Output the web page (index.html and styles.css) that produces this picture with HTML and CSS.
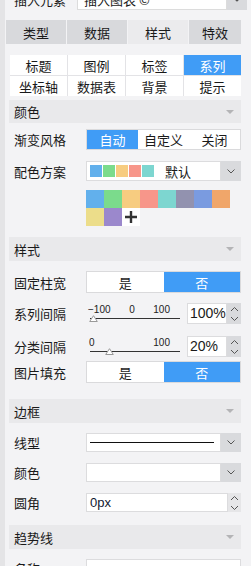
FILE: index.html
```html
<!DOCTYPE html>
<html lang="zh">
<head>
<meta charset="utf-8">
<link rel="stylesheet" href="styles.css">
</head>
<body>
<div class="panel">
  <div class="top-row">
    <span class="lbl top-lbl">插入元素</span>
    <div class="top-select">插入图表 ©</div>
    <div class="arrow-btn"><svg width="8" height="5" viewBox="0 0 8 5"><path d="M0.5 0.5 L4 4 L7.5 0.5" fill="none" stroke="#555" stroke-width="1.2"/></svg></div>
  </div>

  <div class="tabs">
    <div class="tab">类型</div>
    <div class="tab">数据</div>
    <div class="tab active">样式</div>
    <div class="tab">特效</div>
  </div>

  <div class="subtabs">
    <div class="sub">标题</div>
    <div class="sub">图例</div>
    <div class="sub">标签</div>
    <div class="sub active">系列</div>
    <div class="sub">坐标轴</div>
    <div class="sub">数据表</div>
    <div class="sub">背景</div>
    <div class="sub">提示</div>
  </div>

  <div class="head h-color"><span>颜色</span><i class="tri"></i></div>

  <div class="row r-grad">
    <span class="lbl">渐变风格</span>
    <div class="seg">
      <div class="seg-i on">自动</div>
      <div class="seg-i">自定义</div>
      <div class="seg-i">关闭</div>
    </div>
  </div>

  <div class="row r-scheme">
    <span class="lbl">配色方案</span>
    <div class="select">
      <div class="sel-body scheme">
        <span class="sw" style="background:#62b0ec"></span>
        <span class="sw" style="background:#7bdb8c"></span>
        <span class="sw" style="background:#f7cc80"></span>
        <span class="sw" style="background:#f7968a"></span>
        <span class="sw" style="background:#7dd6d0"></span>
        <span class="scheme-name">默认</span>
      </div>
      <div class="sel-btn"><svg width="8" height="5" viewBox="0 0 8 5"><path d="M0.5 0.5 L4 4 L7.5 0.5" fill="none" stroke="#555" stroke-width="1"/></svg></div>
    </div>
  </div>

  <div class="palette">
    <span style="background:#62b0ec"></span>
    <span style="background:#7bdb8c"></span>
    <span style="background:#f7cc80"></span>
    <span style="background:#f7968a"></span>
    <span style="background:#7dd6d0"></span>
    <span style="background:#9292af"></span>
    <span style="background:#7a9be0"></span>
    <span style="background:#f0a66a"></span>
    <span style="background:#ecdd8a"></span>
    <span style="background:#9b88cc"></span>
    <span class="plus"><svg width="12" height="12" viewBox="0 0 12 12"><path d="M6 0 V12 M0 6 H12" stroke="#333" stroke-width="2.4"/></svg></span>
  </div>

  <div class="head h-style"><span>样式</span><i class="tri"></i></div>

  <div class="row r-fixed">
    <span class="lbl">固定柱宽</span>
    <div class="toggle">
      <div class="tg">是</div>
      <div class="tg on">否</div>
    </div>
  </div>

  <div class="row r-slider1">
    <span class="lbl">系列间隔</span>
    <div class="slider">
      <div class="ticks"><span>−100</span><span>0</span><span>100</span></div>
      <div class="track"></div>
      <svg class="thumb" style="left:1px" width="9" height="7" viewBox="0 0 9 7"><path d="M4.5 0.7 L8.3 6.5 H0.7 Z" fill="#fff" stroke="#999" stroke-width="1"/></svg>
    </div>
    <div class="num">100%</div>
    <div class="spin"><svg width="9" height="16" viewBox="0 0 9 16"><path d="M1 5 L4.5 1.5 L8 5 M1 11 L4.5 14.5 L8 11" fill="none" stroke="#555" stroke-width="1"/></svg></div>
  </div>

  <div class="row r-slider2">
    <span class="lbl">分类间隔</span>
    <div class="slider">
      <div class="ticks t2"><span>0</span><span>100</span></div>
      <div class="track"></div>
      <svg class="thumb" style="left:17px" width="9" height="7" viewBox="0 0 9 7"><path d="M4.5 0.7 L8.3 6.5 H0.7 Z" fill="#fff" stroke="#999" stroke-width="1"/></svg>
    </div>
    <div class="num">20%</div>
    <div class="spin"><svg width="9" height="16" viewBox="0 0 9 16"><path d="M1 5 L4.5 1.5 L8 5 M1 11 L4.5 14.5 L8 11" fill="none" stroke="#555" stroke-width="1"/></svg></div>
  </div>

  <div class="row r-img">
    <span class="lbl">图片填充</span>
    <div class="toggle">
      <div class="tg">是</div>
      <div class="tg on">否</div>
    </div>
  </div>

  <div class="head h-border"><span>边框</span><i class="tri"></i></div>

  <div class="row r-line">
    <span class="lbl">线型</span>
    <div class="select">
      <div class="sel-body"><span class="line"></span></div>
      <div class="sel-btn"><svg width="8" height="5" viewBox="0 0 8 5"><path d="M0.5 0.5 L4 4 L7.5 0.5" fill="none" stroke="#555" stroke-width="1"/></svg></div>
    </div>
  </div>

  <div class="row r-bcolor">
    <span class="lbl">颜色</span>
    <div class="select">
      <div class="sel-body"></div>
      <div class="sel-btn"><svg width="8" height="5" viewBox="0 0 8 5"><path d="M0.5 0.5 L4 4 L7.5 0.5" fill="none" stroke="#555" stroke-width="1"/></svg></div>
    </div>
  </div>

  <div class="row r-radius">
    <span class="lbl">圆角</span>
    <div class="text-in">0px</div>
    <div class="spin light"><svg width="9" height="16" viewBox="0 0 9 16"><path d="M1 5 L4.5 1.5 L8 5 M1 11 L4.5 14.5 L8 11" fill="none" stroke="#555" stroke-width="1"/></svg></div>
  </div>

  <div class="head h-trend"><span>趋势线</span><i class="tri"></i></div>

  <div class="row r-name">
    <span class="lbl">名称</span>
    <div class="text-in full"></div>
  </div>
</div>
</body>
</html>
```

FILE: styles.css
```css
* { box-sizing: border-box; }
html, body { margin: 0; padding: 0; }
body {
  background: #f3f3f5;
  font-family: "Noto Sans CJK SC", "Noto Sans", sans-serif;
  font-size: 13px;
  color: #1a1a1a;
  width: 251px;
  height: 566px;
  overflow: hidden;
}
.panel {
  border-left: 5px solid #e4e4e6;
  width: 251px;
  height: 566px;
  overflow: hidden;
}

.top-row {
  display: flex;
  align-items: center;
  height: 21px;
  margin-top: -11px;
}
.top-lbl { width: 66px; padding-left: 9px; }
.top-select {
  width: 150px;
  height: 21px;
  background: #fff;
  border: 1px solid #dcdcdc;
  padding-left: 6px;
  line-height: 19px;
  white-space: nowrap;
  overflow: hidden;
}
.arrow-btn {
  width: 20px;
  height: 21px;
  background: #d9dadd;
  display: flex;
  align-items: center;
  justify-content: center;
}

.tabs {
  display: grid;
  grid-template-columns: 60px 60px 60px 52px;
  gap: 1px;
  margin: 10px 0 0 1px;
  height: 24px;
}
.tab {
  background: #d8d9dc;
  display: flex;
  align-items: center;
  justify-content: center;
}
.tab.active { background: #ebebed; }

.subtabs {
  display: grid;
  grid-template-columns: repeat(4, 57px);
  grid-auto-rows: 20px;
  gap: 1px;
  background: #e3e3e6;
  margin: 11px 0 0 5px;
  width: 231px;
}
.sub {
  background: #fff;
  display: flex;
  align-items: center;
  justify-content: center;
}
.sub.active { background: #409cf6; color: #fff; }

.head {
  margin-left: 4px;
  width: 232px;
  height: 24px;
  background: #e9e9eb;
  display: flex;
  align-items: center;
  justify-content: space-between;
  padding: 0 7px 0 5px;
}
.tri {
  width: 0; height: 0;
  border-left: 4px solid transparent;
  border-right: 4px solid transparent;
  border-top: 4px solid #b4b4b6;
}
.h-color { margin-top: 4px; height: 23px; }
.h-style { margin-top: 11px; }
.h-border { margin-top: 16px; }
.h-trend { margin-top: 13px; }

.row {
  display: flex;
  align-items: center;
  margin-left: 9px;
}
.lbl { width: 72px; flex: none; }

.seg, .toggle {
  width: 155px;
  display: flex;
  border: 1px solid #dadadc;
  background: #fff;
}
.seg { height: 21px; }
.toggle { height: 22px; }
.seg-i, .tg {
  flex: 1;
  display: flex;
  align-items: center;
  justify-content: center;
  background: #fff;
}
.seg-i.on, .tg.on { background: #409cf6; color: #fff; }
.seg .seg-i:first-child { flex: 0 0 51px; }

.r-grad { margin-top: 6px; }
.r-scheme { margin-top: 11px; }
.select {
  width: 155px;
  height: 20px;
  display: flex;
}
.sel-body {
  flex: 1;
  background: #fff;
  border: 1px solid #dcdcde;
  display: flex;
  align-items: center;
  padding-left: 3px;
}
.sel-btn {
  width: 20px;
  background: #d9dadd;
  display: flex;
  align-items: center;
  justify-content: center;
}
.scheme { gap: 1px; }
.sw { width: 12px; height: 12px; display: block; }
.scheme-name { margin-left: 10px; }

.palette {
  display: grid;
  grid-template-columns: repeat(8, 18px);
  grid-auto-rows: 18px;
  margin: 9px 0 0 81px;
}
.palette span { display: block; }
.palette .plus {
  background: #fff;
  display: flex;
  align-items: center;
  justify-content: center;
}

.r-fixed { margin-top: 10px; }
.r-slider1 { margin-top: 10px; height: 21px; }
.r-slider2 { margin-top: 12px; height: 21px; }
.r-img { margin-top: 4px; }

.slider {
  position: relative;
  width: 92px;
  height: 21px;
  margin-left: 2px;
}
.ticks {
  display: flex;
  justify-content: space-between;
  font-family: "Liberation Sans", Arial, sans-serif;
  font-size: 10px;
  line-height: 10px;
  padding: 2px 10px 0 0;
  color: #222;
}
.ticks.t2 { padding-left: 1px; }
.track {
  position: absolute;
  left: 2px;
  right: 0;
  top: 15px;
  height: 1px;
  background: #333;
}
.thumb { position: absolute; top: 12px; }
.num {
  margin-left: 7px;
  width: 40px;
  height: 21px;
  background: #fff;
  border: 1px solid #dcdcde;
  font-family: "Liberation Sans", Arial, sans-serif;
  font-size: 14px;
  line-height: 19px;
  padding-left: 2px;
}
.spin {
  width: 14px;
  height: 21px;
  background: #d9dadd;
  display: flex;
  align-items: center;
  justify-content: center;
}
.spin.light { background: #e6e6e8; height: 19px; width: 13px; }

.r-line { margin-top: 10px; }
.r-line .select, .r-bcolor .select { height: 19px; }
.line { display: block; width: 124px; height: 1px; border-top: 1.5px solid #111; }
.r-bcolor { margin-top: 11px; }
.r-radius { margin-top: 11px; }
.text-in {
  width: 142px;
  height: 19px;
  background: #fff;
  border: 1px solid #dcdcde;
  font-family: "Liberation Sans", Arial, sans-serif;
  font-size: 13px;
  line-height: 17px;
  padding-left: 3px;
  color: #101830;
}
.text-in.full { width: 155px; }
.r-name { margin-top: 10px; }
```
